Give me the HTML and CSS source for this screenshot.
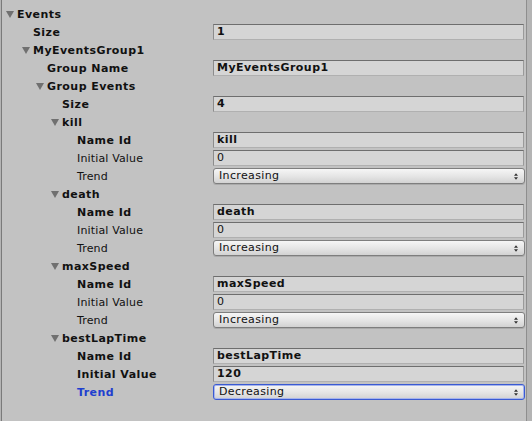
FILE: index.html
```html
<!DOCTYPE html>
<html>
<head>
<meta charset="utf-8">
<link rel="stylesheet" href="styles.css">
</head>
<body>
<div class="panel">
  <div class="row"><div class="label fold lv0 b"><svg class="tri" viewBox="0 0 8 7"><path d="M0 0H8L4 7Z"/></svg>Events</div></div>
  <div class="row"><div class="label lv1 b">Size</div><div class="field b">1</div></div>
  <div class="row"><div class="label fold lv1 b"><svg class="tri" viewBox="0 0 8 7"><path d="M0 0H8L4 7Z"/></svg>MyEventsGroup1</div></div>
  <div class="row"><div class="label lv2 b">Group Name</div><div class="field b">MyEventsGroup1</div></div>
  <div class="row"><div class="label fold lv2 b"><svg class="tri" viewBox="0 0 8 7"><path d="M0 0H8L4 7Z"/></svg>Group Events</div></div>
  <div class="row"><div class="label lv3 b">Size</div><div class="field b">4</div></div>

  <div class="row"><div class="label fold lv3 b"><svg class="tri" viewBox="0 0 8 7"><path d="M0 0H8L4 7Z"/></svg>kill</div></div>
  <div class="row"><div class="label lv4 b">Name Id</div><div class="field b">kill</div></div>
  <div class="row"><div class="label lv4">Initial Value</div><div class="field">0</div></div>
  <div class="row"><div class="label lv4">Trend</div><div class="select"><span>Increasing</span><svg class="arr" viewBox="0 0 5 8"><path d="M0 3H5L2.5 0Z M0 5H5L2.5 8Z"/></svg></div></div>

  <div class="row"><div class="label fold lv3 b"><svg class="tri" viewBox="0 0 8 7"><path d="M0 0H8L4 7Z"/></svg>death</div></div>
  <div class="row"><div class="label lv4 b">Name Id</div><div class="field b">death</div></div>
  <div class="row"><div class="label lv4">Initial Value</div><div class="field">0</div></div>
  <div class="row"><div class="label lv4">Trend</div><div class="select"><span>Increasing</span><svg class="arr" viewBox="0 0 5 8"><path d="M0 3H5L2.5 0Z M0 5H5L2.5 8Z"/></svg></div></div>

  <div class="row"><div class="label fold lv3 b"><svg class="tri" viewBox="0 0 8 7"><path d="M0 0H8L4 7Z"/></svg>maxSpeed</div></div>
  <div class="row"><div class="label lv4 b">Name Id</div><div class="field b">maxSpeed</div></div>
  <div class="row"><div class="label lv4">Initial Value</div><div class="field">0</div></div>
  <div class="row"><div class="label lv4">Trend</div><div class="select"><span>Increasing</span><svg class="arr" viewBox="0 0 5 8"><path d="M0 3H5L2.5 0Z M0 5H5L2.5 8Z"/></svg></div></div>

  <div class="row"><div class="label fold lv3 b"><svg class="tri" viewBox="0 0 8 7"><path d="M0 0H8L4 7Z"/></svg>bestLapTime</div></div>
  <div class="row"><div class="label lv4 b">Name Id</div><div class="field b">bestLapTime</div></div>
  <div class="row"><div class="label lv4 b">Initial Value</div><div class="field b">120</div></div>
  <div class="row"><div class="label lv4 b focus-label">Trend</div><div class="select focused"><span>Decreasing</span><svg class="arr" viewBox="0 0 5 8"><path d="M0 3H5L2.5 0Z M0 5H5L2.5 8Z"/></svg></div></div>
</div>
</body>
</html>
```

FILE: styles.css
```css
html, body {
  margin: 0;
  padding: 0;
}
body {
  background: #b4b4b4;
  width: 532px;
  height: 421px;
  overflow: hidden;
  font-family: "DejaVu Sans", sans-serif;
  font-size: 11px;
  color: #111;
}
.panel {
  margin-left: 1px;
  width: 526px;
  height: 421px;
  box-sizing: border-box;
  background: #c2c2c2;
  border-left: 1px solid #7a7a7a;
  border-right: 1px solid #8e8e8e;
  padding-top: 5px;
  display: flex;
  flex-direction: column;
}
.row {
  height: 18px;
  display: flex;
  align-items: center;
}
.label {
  width: 211px;
  flex: none;
  box-sizing: border-box;
  white-space: nowrap;
  letter-spacing: 0.15px;
  display: flex;
  align-items: center;
}
.b {
  font-weight: bold;
  letter-spacing: 0.45px;
}
.lv0 { padding-left: 15px; }
.lv1 { padding-left: 31px; }
.lv2 { padding-left: 45px; }
.lv3 { padding-left: 60px; }
.lv4 { padding-left: 75px; }
.fold.lv0 { padding-left: 4px; }
.fold.lv1 { padding-left: 20px; }
.fold.lv2 { padding-left: 34px; }
.fold.lv3 { padding-left: 49px; }
.tri {
  width: 8px;
  height: 7px;
  margin-right: 3px;
  margin-top: 1px;
  fill: #707070;
  flex: none;
}
.field {
  flex: 1;
  margin-right: 2px;
  height: 16px;
  box-sizing: border-box;
  background: #d5d5d5;
  border: 1px solid;
  border-color: #6e6e6e #9a9a9a #b0b0b0 #8c8c8c;
  padding-left: 3px;
  line-height: 14px;
  white-space: nowrap;
}
.select {
  flex: 1;
  margin-right: 1px;
  height: 16px;
  box-sizing: border-box;
  border: 1px solid #7e7e7e;
  border-radius: 3px;
  background: linear-gradient(#f6f6f6, #e4e4e4 55%, #d2d2d2);
  box-shadow: 0 1px 0 rgba(0, 0, 0, 0.12);
  display: flex;
  align-items: center;
  justify-content: space-between;
  padding: 0 6px 0 5px;
  letter-spacing: 0.35px;
}
.select span {
  line-height: 14px;
}
.arr {
  width: 4px;
  height: 7px;
  fill: #333;
}
.select.focused {
  border-color: #3a5ad2;
  box-shadow: inset 0 0 0 1px #a6b4ec;
}
.focus-label {
  color: #1f3fcf;
}
```
